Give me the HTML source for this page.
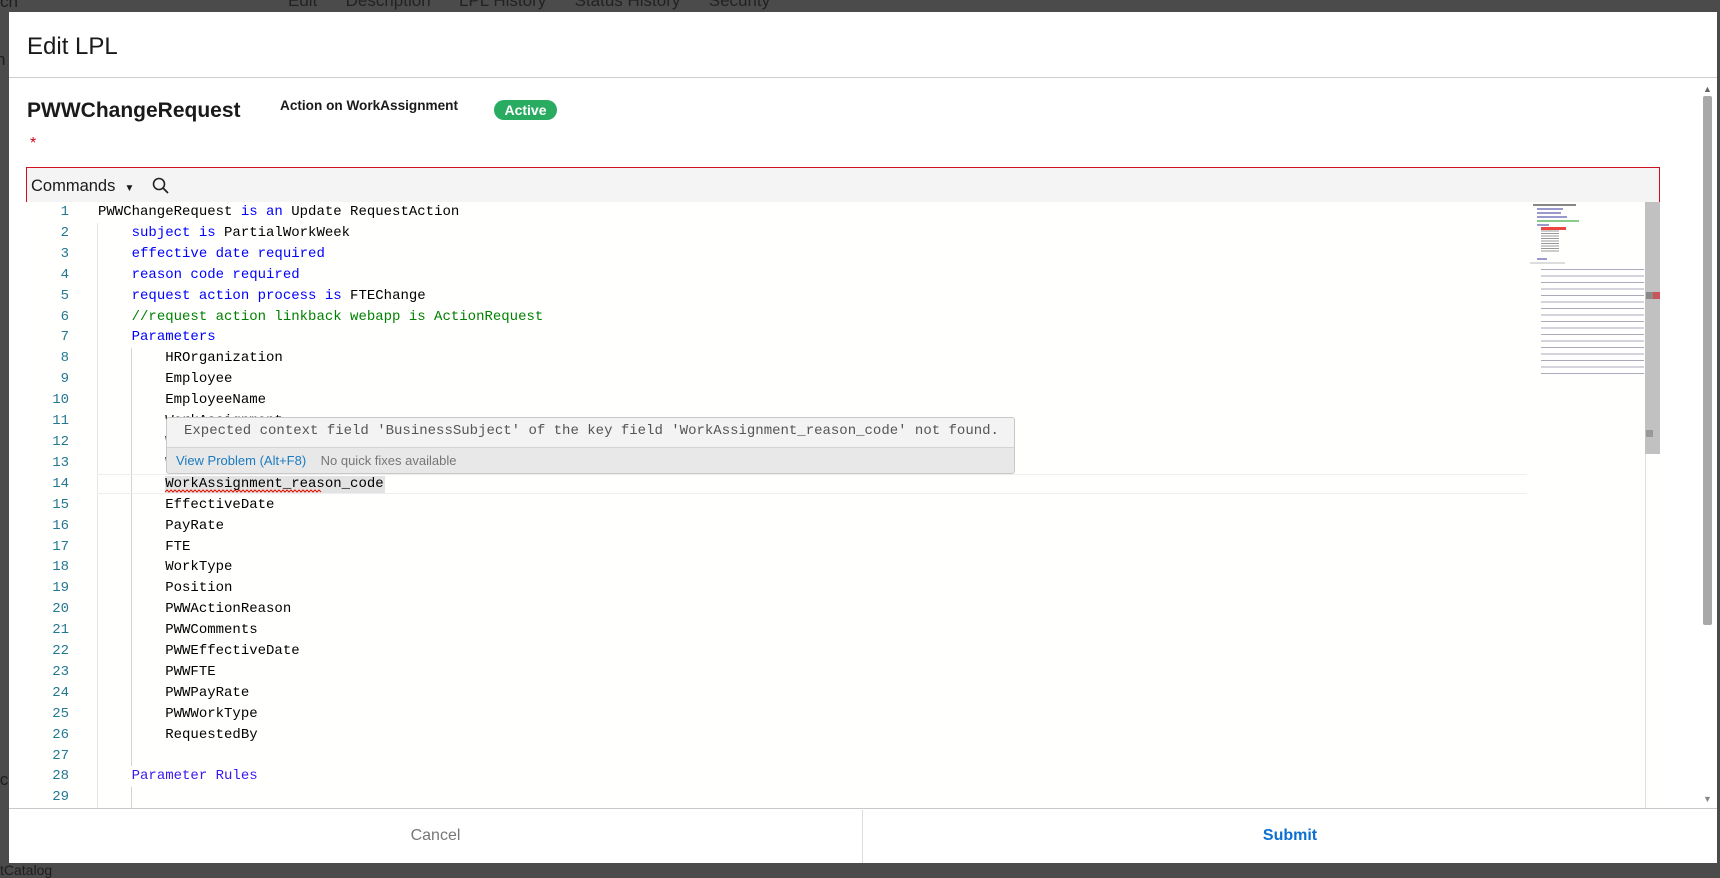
<!DOCTYPE html>
<html><head><meta charset="utf-8"><style>
*{box-sizing:border-box;margin:0;padding:0}
body{width:1720px;height:870px;overflow:hidden;background:#4b4b4b;font-family:"Liberation Sans",sans-serif;position:relative}
.bg{position:absolute;color:#1e1e1e;font-size:17px}
.modal{position:absolute;left:9px;top:12px;width:1708px;height:851px;background:#fff}
.abs{position:absolute}
.code{position:absolute;left:0;top:190px;font-family:"Liberation Mono",monospace;font-size:14px;line-height:20.9px;white-space:pre;color:#000}
.ln{position:absolute;left:0;width:43px;text-align:right;font-family:"Liberation Mono",monospace;font-size:14px;line-height:20.9px;color:#237893}
.k{color:#0000ff}.c{color:#008000}
.g{position:absolute;width:1px;background:#d3d3d3}
.mm{position:absolute;height:2px;background:#aaa}
</style></head><body>
<div class="bg" style="left:288px;top:-9px;color:#222">Edit&nbsp;&nbsp;&nbsp;&nbsp;&nbsp;&nbsp;Description&nbsp;&nbsp;&nbsp;&nbsp;&nbsp;&nbsp;LPL History&nbsp;&nbsp;&nbsp;&nbsp;&nbsp;&nbsp;Status History&nbsp;&nbsp;&nbsp;&nbsp;&nbsp;&nbsp;Security</div>
<div class="bg" style="left:0;top:-8px">ch</div>
<div class="bg" style="left:-4px;top:50px">n</div>
<div class="bg" style="left:-4px;top:770px">ic</div>
<div class="bg" style="left:0;top:862px;font-size:14px">tCatalog</div>
<div class="modal">
  <div class="abs" style="left:18px;top:21px;font-size:24px;color:#1a1a1a">Edit LPL</div>
  <div class="abs" style="left:0;top:65px;width:1708px;height:1px;background:#cfcfcf"></div>
  <div class="abs" style="left:18px;top:87px;font-size:21px;font-weight:bold;color:#1a1a1a">PWWChangeRequest</div>
  <div class="abs" style="left:271px;top:86px;font-size:13.6px;font-weight:bold;color:#1a1a1a">Action on WorkAssignment</div>
  <div class="abs" style="left:485px;top:88px;width:63px;height:20px;border-radius:10px;background:#2aab62;color:#fff;font-size:14px;font-weight:bold;text-align:center;line-height:20px">Active</div>
  <div class="abs" style="left:21px;top:123px;color:#d0021b;font-size:16px">*</div>
  <!-- toolbar -->
  <div class="abs" style="left:17px;top:155px;width:1634px;height:35px;background:#f4f4f4;border:1px solid #d0101e;border-bottom:none"></div>
  <div class="abs" style="left:22px;top:165px;font-size:16.5px;color:#1a1a1a">Commands&nbsp;&nbsp;<span style="font-size:10px">▼</span></div>
  <svg class="abs" style="left:142px;top:164px" width="20" height="20" viewBox="0 0 20 20"><circle cx="8" cy="8" r="5.5" fill="none" stroke="#222" stroke-width="1.6"/><line x1="12" y1="12" x2="17" y2="17" stroke="#222" stroke-width="1.8"/></svg>
  <!-- editor -->
  <div class="abs" style="left:17px;top:190px;width:1634px;height:606px;background:#fffffe;overflow:hidden">
    <div class="ln" style="top:0">1<br>2<br>3<br>4<br>5<br>6<br>7<br>8<br>9<br>10<br>11<br>12<br>13<br>14<br>15<br>16<br>17<br>18<br>19<br>20<br>21<br>22<br>23<br>24<br>25<br>26<br>27<br>28<br>29</div>
    <div class="g" style="left:71px;top:21px;height:585px;background:#e6e6e6"></div>
    <div class="g" style="left:105px;top:146px;height:418px"></div>
    <div class="g" style="left:105px;top:585px;height:21px"></div>
    <div class="abs" style="left:71px;top:272px;width:1430px;height:20px;border-top:1px solid #eee;border-bottom:1px solid #eee"></div>
    <div class="abs" style="left:139px;top:274px;width:220px;height:17px;background:#e3e3e3"></div>
    <svg class="abs" style="left:139px;top:287px" width="220" height="4"><path d="M0 3 l2-2 2 2 2-2 2 2 2-2 2 2 2-2 2 2 2-2 2 2 2-2 2 2 2-2 2 2 2-2 2 2 2-2 2 2 2-2 2 2 2-2 2 2 2-2 2 2 2-2 2 2 2-2 2 2 2-2 2 2 2-2 2 2 2-2 2 2 2-2 2 2 2-2 2 2 2-2 2 2 2-2 2 2 2-2 2 2 2-2 2 2 2-2 2 2 2-2 2 2 2-2 2 2 2-2 2 2 2-2 2 2 2-2 2 2 2-2 2 2 2-2 2 2 2-2 2 2 2-2 2 2 2-2 2 2 2-2 2 2 2-2 2 2 2-2 2 2 2-2 2 2 2-2 2 2" fill="none" stroke="#e51400" stroke-width="1"/></svg>
    <div class="code" style="left:72px;top:0">PWWChangeRequest <span class="k">is an</span> Update RequestAction
    <span class="k">subject is</span> PartialWorkWeek
    <span class="k">effective date required</span>
    <span class="k">reason code required</span>
    <span class="k">request action process is</span> FTEChange
    <span class="c">//request action linkback webapp is ActionRequest</span>
    <span class="k">Parameters</span>
        HROrganization
        Employee
        EmployeeName
        WorkAssignment
        WorkAssignment_x
        WorkAssignment_y
        WorkAssignment_reason_code
        EffectiveDate
        PayRate
        FTE
        WorkType
        Position
        PWWActionReason
        PWWComments
        PWWEffectiveDate
        PWWFTE
        PWWPayRate
        PWWWorkType
        RequestedBy

    <span class="k" style="color:#3a16f0">Parameter Rules</span>
</div>
    <!-- minimap -->
    <div class="mm" style="left:1507px;top:2px;width:43px;background:#888"></div>
    <div class="mm" style="left:1511px;top:6px;width:26px;background:#99c"></div>
    <div class="mm" style="left:1511px;top:10px;width:24px;background:#99c"></div>
    <div class="mm" style="left:1511px;top:14px;width:30px;background:#99c"></div>
    <div class="mm" style="left:1511px;top:18px;width:42px;background:#8c8"></div>
    <div class="mm" style="left:1511px;top:22px;width:12px;background:#99c"></div>
    <div class="abs" style="left:1515px;top:26px;width:18px;height:24px;background:repeating-linear-gradient(#999 0 1px,#fff 1px 2.5px)"></div>
    <div class="mm" style="left:1515px;top:25px;width:25px;background:#e44;height:3px"></div>
    <div class="mm" style="left:1511px;top:56px;width:10px;background:#99c"></div>
    <div class="mm" style="left:1504px;top:60px;width:35px;background:#ddd"></div>
    <div class="abs" style="left:1515px;top:64px;width:103px;height:108px;background:repeating-linear-gradient(#fff 0 3px,#aab 3px 4px,#fff 4px 6.5px)"></div>
    <div class="abs" style="left:1619px;top:0;width:15px;height:252px;background:#c1c1c1"></div>
    <div class="abs" style="left:1619px;top:252px;width:1px;height:354px;background:#e0e0e0"></div>
    <div class="abs" style="left:1627px;top:90px;width:7px;height:7px;background:#c9545a"></div>
    <div class="abs" style="left:1620px;top:90px;width:7px;height:7px;background:#8a8a8a"></div>
    <div class="abs" style="left:1620px;top:228px;width:7px;height:7px;background:#999"></div>
  </div>
  <!-- tooltip -->
  <div class="abs" style="left:157px;top:405px;width:849px;height:57px;border:1px solid #c8c8c8;border-radius:3px;background:#e8e8e8;overflow:hidden">
    <div style="height:30px;background:#f3f3f3;border-bottom:1px solid #d4d4d4;font-family:'Liberation Mono',monospace;font-size:14px;color:#555;padding-left:17px;line-height:27px">Expected context field 'BusinessSubject' of the key field 'WorkAssignment_reason_code' not found.</div>
    <div style="font-size:13px;line-height:25px;padding-left:9px;color:#777"><span style="color:#1a7bc1">View Problem (Alt+F8)</span>&nbsp;&nbsp;&nbsp;&nbsp;No quick fixes available</div>
  </div>
  <!-- modal scrollbar -->
  <div class="abs" style="left:1694px;top:72px;font-size:9px;color:#666">▲</div>
  <div class="abs" style="left:1694px;top:84px;width:9px;height:529px;background:#a8a8a8;border-radius:2px"></div>
  <div class="abs" style="left:1694px;top:782px;font-size:9px;color:#888">▼</div>
  <!-- footer -->
  <div class="abs" style="left:0;top:796px;width:1708px;height:1px;background:#c9c9c9"></div>
  <div class="abs" style="left:853px;top:798px;width:1px;height:53px;background:#ddd"></div>
  <div class="abs" style="left:0;top:815px;width:853px;text-align:center;font-size:16px;color:#777">Cancel</div>
  <div class="abs" style="left:854px;top:815px;width:854px;text-align:center;font-size:16px;color:#0a6fd1;font-weight:bold">Submit</div>
</div>
</body></html>
